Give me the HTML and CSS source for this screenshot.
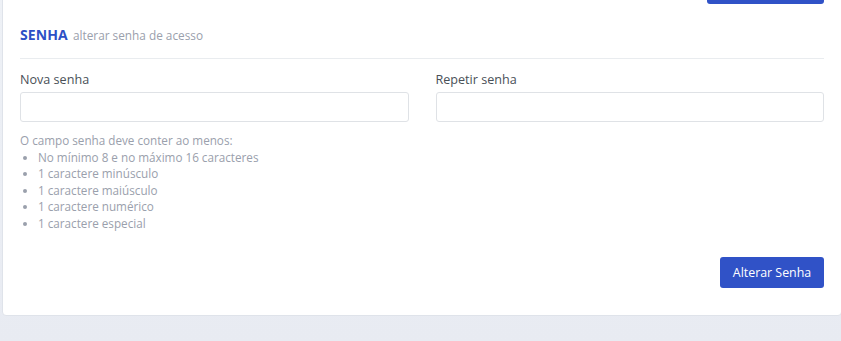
FILE: index.html
```html
<!DOCTYPE html>
<html lang="pt-BR">
<head>
    <meta charset="UTF-8">
    <meta name="viewport" content="width=device-width, initial-scale=1.0">
    <title>Alterar senha</title>
    <link rel="stylesheet" href="styles.css">
</head>
<body>
    <div class="page">
        <div class="card">
            <div class="actions actions-top">
                <button class="btn btn-wide">Salvar dados</button>
            </div>

            <div class="section-title">
                <strong>SENHA</strong>
                <small>alterar senha de acesso</small>
            </div>

            <div class="row">
                <div class="form-group">
                    <label for="novaSenha">Nova senha</label>
                    <input type="password" id="novaSenha">
                </div>
                <div class="form-group">
                    <label for="repetirSenha">Repetir senha</label>
                    <input type="password" id="repetirSenha">
                </div>
            </div>

            <div class="help">
                O campo senha deve conter ao menos:
                <ul>
                    <li>No mínimo 8 e no máximo 16 caracteres</li>
                    <li>1 caractere minúsculo</li>
                    <li>1 caractere maiúsculo</li>
                    <li>1 caractere numérico</li>
                    <li>1 caractere especial</li>
                </ul>
            </div>

            <div class="actions actions-bottom">
                <button class="btn">Alterar Senha</button>
            </div>
        </div>
    </div>
</body>
</html>
```

FILE: styles.css
```css
body {
    margin: 0;
    font-family: "Open Sans", Arial, sans-serif;
    background: linear-gradient(180deg, #eef1f6 0%, #e8ebf2 100%);
    overflow: hidden;
    height: 341px;
}
.page {
    padding-left: 2px;
}
.card {
    width: 840px;
    box-sizing: border-box;
    margin-top: -46px;
    background: #fff;
    border: 1px solid #dfe3ea;
    border-radius: 4px;
    padding: 0 17px 27px;
}
.actions {
    display: flex;
    justify-content: flex-end;
}
.actions-top {
    padding-top: 18px;
}
.btn {
    background-color: #3052c7;
    color: #fff;
    border: none;
    border-radius: 3px;
    font-family: inherit;
    font-size: 12.4px;
    height: 31px;
    padding: 0 12px;
    cursor: pointer;
}
.btn-wide {
    width: 117px;
    padding-bottom: 12px;
    line-height: 14px;
}
.section-title {
    margin-top: 21px;
    padding-bottom: 14px;
    border-bottom: 1px solid #e9ecef;
    line-height: 18px;
}
.section-title strong {
    color: #2d50c6;
    font-size: 14px;
    font-weight: 700;
    letter-spacing: 0.1px;
}
.section-title small {
    color: #9aa0ac;
    font-size: 11.8px;
    margin-left: 1px;
}
.row {
    display: grid;
    grid-template-columns: 1fr 1fr;
    column-gap: 27px;
    margin-top: 12px;
}
label {
    display: block;
    font-size: 12.6px;
    color: #495057;
    line-height: 18px;
    margin-bottom: 3px;
}
input {
    display: block;
    width: 100%;
    box-sizing: border-box;
    height: 30px;
    border: 1px solid #dfe2e6;
    border-radius: 3px;
    background: #fff;
}
.help {
    margin-top: 10px;
    font-size: 11.7px;
    color: #9aa0ac;
    line-height: 16.6px;
}
.help ul {
    margin: 0;
    padding-left: 18px;
}
.help li::marker {
    font-size: 11px;
}
.actions-bottom {
    margin-top: 25px;
}
.actions-bottom .btn {
    min-width: 104px;
}
```
